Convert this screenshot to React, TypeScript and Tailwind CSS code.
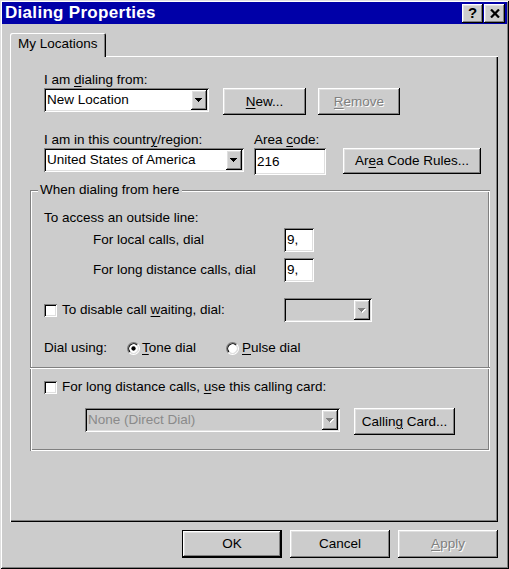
import React from "react";

const raised =
  "shadow-[inset_-1px_-1px_0_#000,inset_1px_1px_0_#fff,inset_-2px_-2px_0_#808080,inset_2px_2px_0_#dfdfdf]";
const sunken =
  "shadow-[inset_1px_1px_0_#808080,inset_-1px_-1px_0_#fff,inset_2px_2px_0_#000,inset_-2px_-2px_0_#dfdfdf]";
const etched =
  "shadow-[inset_1px_1px_0_#808080,inset_-1px_-1px_0_#fff,inset_2px_2px_0_#fff,inset_-2px_-2px_0_#808080]";
const dim = "text-[#808080] [text-shadow:1px_1px_0_#fff]";

function U({ children }: { children: React.ReactNode }) {
  return <span className="underline underline-offset-[2px] decoration-1">{children}</span>;
}

function Arrow({ disabled }: { disabled?: boolean }) {
  const rows = (
    <>
      <rect x="0" y="0" width="7" height="1" />
      <rect x="1" y="1" width="5" height="1" />
      <rect x="2" y="2" width="3" height="1" />
      <rect x="3" y="3" width="1" height="1" />
    </>
  );
  return (
    <svg width="8" height="5" viewBox="0 0 8 5" shapeRendering="crispEdges">
      {disabled && (
        <g fill="#fff" transform="translate(1 1)">
          {rows}
        </g>
      )}
      <g fill={disabled ? "#808080" : "#000"}>{rows}</g>
    </svg>
  );
}

function Combo({ className, text, disabled }: { className: string; text?: string; disabled?: boolean }) {
  return (
    <div className={`${className} h-[24px] p-[2px] flex ${sunken} ${disabled ? "bg-[#cccccc]" : "bg-white"}`}>
      <div
        className={`flex-1 pl-[1px] leading-[20px] whitespace-nowrap overflow-hidden ${
          disabled ? "text-[#8a8a8a]" : ""
        }`}
      >
        {text}
      </div>
      <div className={`w-[16px] flex items-center justify-center bg-[#cccccc] ${raised}`}>
        <Arrow disabled={disabled} />
      </div>
    </div>
  );
}

function Field({ className, text }: { className: string; text: string }) {
  return (
    <div className={`${className} bg-white p-[2px] pl-[3px] flex items-center leading-[16px] ${sunken}`}>{text}</div>
  );
}

function Btn({
  className,
  children,
  disabled,
  def,
}: {
  className: string;
  children: React.ReactNode;
  disabled?: boolean;
  def?: boolean;
}) {
  return (
    <div
      className={`${className} flex items-center justify-center bg-[#cccccc] whitespace-nowrap ${raised} ${
        def ? "border border-black" : ""
      } ${disabled ? dim : ""}`}
    >
      {children}
    </div>
  );
}

function Check() {
  return <div className={`w-[13px] h-[13px] shrink-0 bg-white ${sunken}`} />;
}

function Radio({ on }: { on?: boolean }) {
  return (
    <svg width="13" height="13" viewBox="0 0 12 12" className="shrink-0">
      <circle cx="6" cy="6" r="4.5" fill="#fff" />
      <path d="M2.11 9.89 A5.5 5.5 0 0 1 9.89 2.11" stroke="#808080" fill="none" />
      <path d="M9.89 2.11 A5.5 5.5 0 0 1 2.11 9.89" stroke="#fff" fill="none" />
      <path d="M2.82 9.18 A4.5 4.5 0 0 1 9.18 2.82" stroke="#000" fill="none" />
      <path d="M9.18 2.82 A4.5 4.5 0 0 1 2.82 9.18" stroke="#dfdfdf" fill="none" />
      {on && <circle cx="6" cy="6" r="2" fill="#000" />}
    </svg>
  );
}

export default function App() {
  return (
    <div className="w-[509px] h-[569px] bg-[#cccccc] p-[2px] flex flex-col font-['Liberation_Sans',Arial,sans-serif] text-[13.5px] leading-[16px] text-black shadow-[inset_1px_1px_0_#dfdfdf,inset_-1px_-1px_0_#000,inset_2px_2px_0_#fff,inset_-2px_-2px_0_#808080]">
      {/* title bar */}
      <div className="h-[22px] bg-[#0000a8] flex items-center justify-between pl-[3px] pr-[2px]">
        <span className="text-white font-bold text-[17px] tracking-[0.3px]">Dialing Properties</span>
        <div className="flex gap-[1px]">
          <div className={`w-[21px] h-[19px] flex items-center justify-center font-bold text-[15px] ${raised} bg-[#cccccc]`}>
            ?
          </div>
          <div className={`w-[21px] h-[19px] flex items-center justify-center ${raised} bg-[#cccccc]`}>
            <svg width="10" height="9" viewBox="0 0 10 9">
              <path d="M1 0.5 L9 8.5 M9 0.5 L1 8.5" stroke="#000" strokeWidth="2.2" />
            </svg>
          </div>
        </div>
      </div>

      {/* tab strip */}
      <div className="mt-[9px] ml-[8px] flex">
        <div className="relative z-10 -mb-px w-[96px] h-[24px] pt-[3px] pl-[8px] bg-[#cccccc] rounded-tl-[2px] rounded-tr-[2px] shadow-[inset_1px_1px_0_#fff,inset_-1px_0_0_#000,inset_-2px_0_0_#808080]">
          My Locations
        </div>
      </div>

      {/* tab pane */}
      <div className="ml-[8px] w-[488px] h-[466px] flex flex-col shadow-[inset_1px_1px_0_#fff,inset_-1px_-1px_0_#000,inset_-2px_-2px_0_#808080]">
        <div className="ml-[34px] pt-[16px] flex flex-col">
          <div>
            I am <U>d</U>ialing from:
          </div>
          <div className="flex items-start">
            <Combo className="w-[165px]" text="New Location" />
            <Btn className="ml-[14px] w-[83px] h-[27px]">
              <span>
                <U>N</U>ew...
              </span>
            </Btn>
            <Btn className="ml-[12px] w-[82px] h-[27px]" disabled>
              <span>
                <U>R</U>emove
              </span>
            </Btn>
          </div>
          <div className="mt-[17px] flex">
            <div className="w-[210px]">
              I am in this countr<U>y</U>/region:
            </div>
            <div>
              Area <U>c</U>ode:
            </div>
          </div>
          <div className="flex items-start">
            <Combo className="w-[200px]" text="United States of America" />
            <Field className="ml-[10px] w-[72px] h-[27px]" text="216" />
            <Btn className="ml-[17px] w-[138px] h-[26px]">
              <span>
                Ar<U>e</U>a Code Rules...
              </span>
            </Btn>
          </div>
        </div>

        {/* group box */}
        <div className={`relative mt-[15px] ml-[20px] w-[460px] h-[261px] flex flex-col ${etched}`}>
          <span className="absolute left-[8px] -top-[8px] px-[2px] bg-[#cccccc]">When dialing from here</span>

          <div className="pl-[14px] pt-[20px] flex flex-col">
            <div>To access an outside line:</div>
            <div className="mt-[2px] h-[24px] flex items-center">
              <div className="w-[240px] pl-[49px]">For local calls, dial</div>
              <Field className="w-[30px] h-[24px]" text="9," />
            </div>
            <div className="mt-[6px] h-[24px] flex items-center">
              <div className="w-[240px] pl-[49px]">For long distance calls, dial</div>
              <Field className="w-[30px] h-[24px]" text="9," />
            </div>
            <div className="mt-[16px] h-[24px] flex items-center">
              <div className="w-[240px] flex items-center">
                <Check />
                <span className="ml-[5px]">
                  To disable call <U>w</U>aiting, dial:
                </span>
              </div>
              <Combo className="w-[88px]" disabled />
            </div>
            <div className="mt-[18px] h-[16px] flex items-center">
              <div className="w-[83px]">Dial using:</div>
              <div className="w-[99px] flex items-center">
                <Radio on />
                <span className="ml-[2px]">
                  <U>T</U>one dial
                </span>
              </div>
              <div className="flex items-center">
                <Radio />
                <span className="ml-[3px]">
                  <U>P</U>ulse dial
                </span>
              </div>
            </div>
          </div>

          <div className="mt-[11px] h-[2px] border-t border-t-[#808080] border-b border-b-white" />

          <div className="pl-[14px] flex flex-col">
            <div className="mt-[10px] h-[16px] flex items-center">
              <Check />
              <span className="ml-[5px]">
                For long distance calls, <U>u</U>se this calling card:
              </span>
            </div>
            <div className="mt-[13px] flex items-start">
              <Combo className="ml-[41px] w-[255px]" text="None (Direct Dial)" disabled />
              <Btn className="ml-[14px] w-[101px] h-[27px]">
                <span>
                  Callin<U>g</U> Card...
                </span>
              </Btn>
            </div>
          </div>
        </div>
      </div>

      {/* dialog buttons */}
      <div className="mt-[8px] ml-[8px] w-[488px] flex justify-end gap-[8px]">
        <Btn className="w-[100px] h-[28px]" def>
          OK
        </Btn>
        <Btn className="w-[100px] h-[28px]">Cancel</Btn>
        <Btn className="w-[100px] h-[28px]" disabled>
          <span>
            <U>A</U>pply
          </span>
        </Btn>
      </div>
    </div>
  );
}
